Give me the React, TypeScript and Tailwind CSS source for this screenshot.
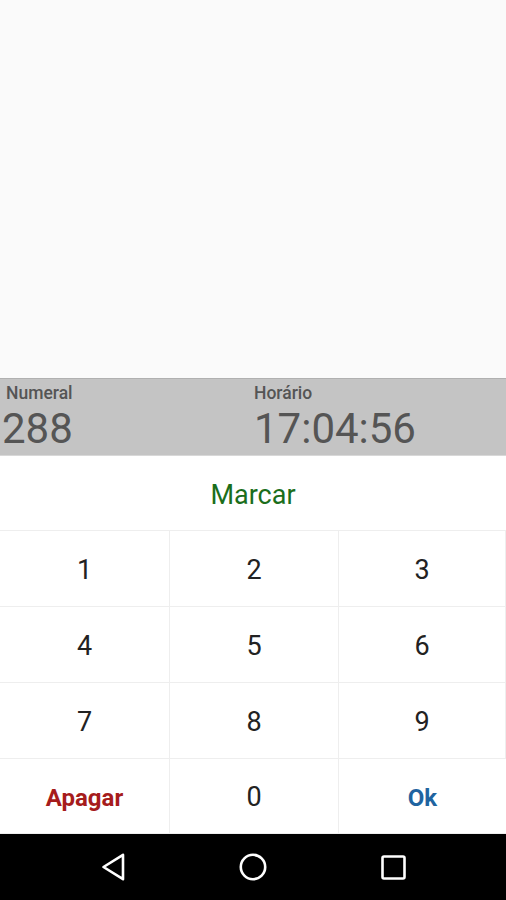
import React from "react";

const Cell = ({ children, className = "" }: { children: React.ReactNode; className?: string }) => (
  <div className={`flex items-center justify-center border-r border-b border-[#eeeeee] pt-[3px] ${className}`}>{children}</div>
);

export default function App() {
  const digits = ["1", "2", "3", "4", "5", "6", "7", "8", "9"];
  return (
    <div className="w-[506px] h-[900px] flex flex-col bg-[#fafafa] overflow-hidden" style={{ fontFamily: "Roboto, 'Liberation Sans', sans-serif" }}>
      <div className="h-[378px] bg-[#fafafa]" />
      <div className="h-[78px] bg-[#c4c4c4] border-t border-[#b0b0b0] border-b border-b-[#d8d8d8] grid grid-cols-2">
        <div className="flex flex-col pl-[6px] pt-[3px]">
          <span className="text-[17.5px] font-medium text-[#555555] leading-[22px]">Numeral</span>
          <span className="text-[42px] text-[#555555] leading-[42px] mt-[4px] -ml-[4px]">288</span>
        </div>
        <div className="flex flex-col pl-[1px] pt-[3px]">
          <span className="text-[17.5px] font-medium text-[#555555] leading-[22px]">Horário</span>
          <span className="text-[42px] text-[#555555] leading-[42px] mt-[4px]">17:04:56</span>
        </div>
      </div>
      <div className="h-[75px] bg-white flex items-center justify-center border-b border-[#eeeeee] pt-[4px]">
        <span className="text-[27px] text-[#1b6e1b]">Marcar</span>
      </div>
      <div className="grid grid-cols-[170px_169px_167px] grid-rows-[76px_76px_76px_75px] bg-white">
        {digits.map((d) => (
          <Cell key={d}>
            <span className="text-[27px] text-[#222222]">{d}</span>
          </Cell>
        ))}
        <Cell>
          <span className="text-[24px] font-bold text-[#a61c1c]">Apagar</span>
        </Cell>
        <Cell>
          <span className="text-[27px] text-[#222222]">0</span>
        </Cell>
        <Cell className="border-r-0">
          <span className="text-[24px] font-bold text-[#1f64a0]">Ok</span>
        </Cell>
      </div>
      <div className="flex-1 bg-black flex items-center justify-center">
        <div className="flex items-center justify-center gap-[100px]">
          <div className="w-[40px] flex justify-center">
            <svg width="24" height="28" viewBox="0 0 24 28" fill="none" stroke="white" strokeWidth="2.6" strokeLinejoin="round">
              <path d="M22 1.8 L2.5 14 L22 26.2 Z" />
            </svg>
          </div>
          <div className="w-[40px] flex justify-center">
            <svg width="28" height="28" viewBox="0 0 28 28" fill="none" stroke="white" strokeWidth="2.6">
              <circle cx="14" cy="14" r="12.2" />
            </svg>
          </div>
          <div className="w-[40px] flex justify-center">
            <svg width="25" height="25" viewBox="0 0 25 25" fill="none" stroke="white" strokeWidth="2.6">
              <rect x="1.5" y="1.5" width="22" height="22" rx="1.5" />
            </svg>
          </div>
        </div>
      </div>
    </div>
  );
}
